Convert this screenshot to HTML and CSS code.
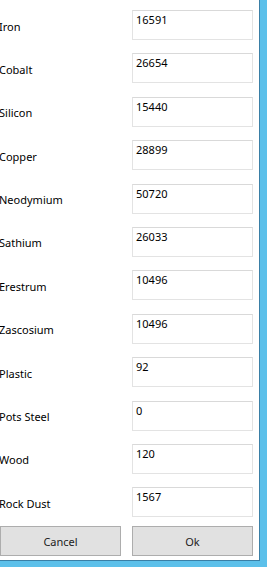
FILE: index.html
```html
<!DOCTYPE html>
<html>
<head>
<meta charset="utf-8">
<link rel="stylesheet" href="styles.css">
</head>
<body>
<div class="frame">
  <div class="window">
    <div class="form">
      <div class="label">Iron</div><div class="box">16591</div>
      <div class="label">Cobalt</div><div class="box">26654</div>
      <div class="label">Silicon</div><div class="box">15440</div>
      <div class="label">Copper</div><div class="box">28899</div>
      <div class="label">Neodymium</div><div class="box">50720</div>
      <div class="label">Sathium</div><div class="box">26033</div>
      <div class="label">Erestrum</div><div class="box">10496</div>
      <div class="label">Zascosium</div><div class="box">10496</div>
      <div class="label">Plastic</div><div class="box">92</div>
      <div class="label">Pots Steel</div><div class="box">0</div>
      <div class="label">Wood</div><div class="box">120</div>
      <div class="label">Rock Dust</div><div class="box">1567</div>
    </div>
    <div class="buttons">
      <div class="btn btn-cancel">Cancel</div>
      <div class="btn btn-ok">Ok</div>
    </div>
  </div>
</div>
</body>
</html>
```

FILE: styles.css
```css
html, body {
  margin: 0;
  padding: 0;
}
body {
  font-family: "Noto Sans", "Open Sans", sans-serif;
  font-size: 11px;
  color: #000;
  background: #5cc0ea;
}
.frame {
  width: 267px;
  height: 567px;
  background: #5cc0ea;
  overflow: hidden;
}
.window {
  box-sizing: border-box;
  width: 260px;
  height: 561px;
  background: #fff;
  border-right: 1px solid #3a7fa6;
  border-bottom: 1px solid #3a7fa6;
  padding-top: 10px;
}
.form {
  display: grid;
  grid-template-columns: 132px 121px;
  grid-auto-rows: 30px;
  row-gap: 13.4px;
}
.label {
  display: flex;
  align-items: center;
  padding-top: 2px;
  margin-left: -1px;
  white-space: nowrap;
}
.box {
  border: 1px solid #e3e3e3;
  border-top-color: #d9d9d9;
  background: #fff;
  padding: 1px 0 0 3px;
  line-height: 15px;
}
.buttons {
  display: grid;
  grid-template-columns: 121px 121px;
  column-gap: 11px;
  margin-top: 9px;
}
.btn {
  height: 30px;
  box-sizing: border-box;
  background: #e1e1e1;
  border: 1px solid #adadad;
  display: flex;
  align-items: center;
  justify-content: center;
  color: #222;
}
```
